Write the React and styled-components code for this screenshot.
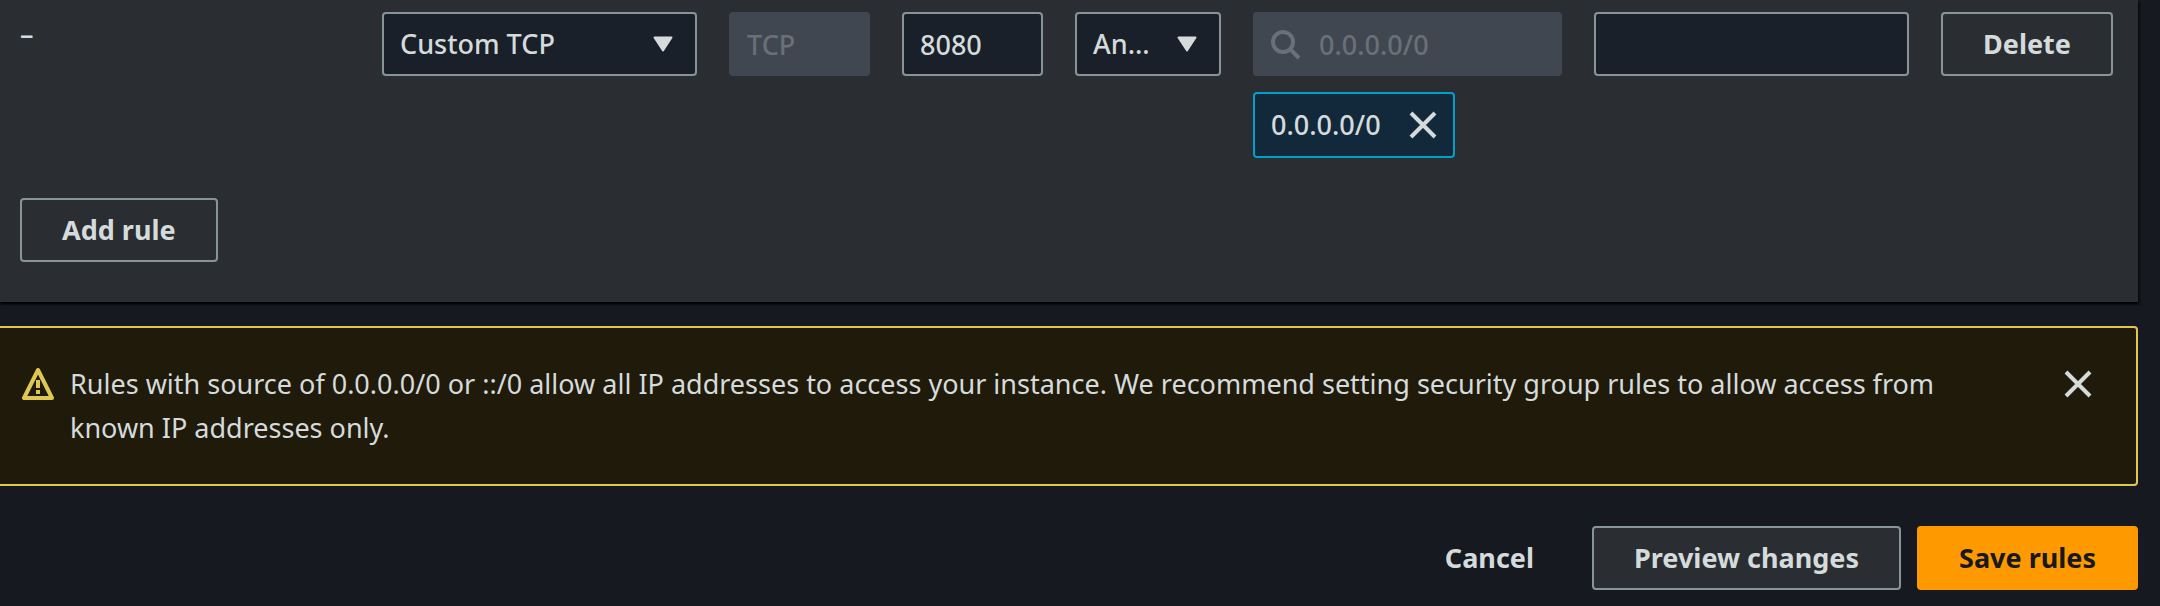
import { useState } from "react";
import styled, { createGlobalStyle, css } from "styled-components";

const GlobalStyle = createGlobalStyle`
  *, *::before, *::after {
    box-sizing: border-box;
  }
  body {
    margin: 0;
    background: #16191f;
    color: #d5dbdb;
    font-family: "Noto Sans", "Open Sans", sans-serif;
    font-size: 27px;
    font-weight: 500;
    line-height: 44px;
  }
  button, input, select {
    font: inherit;
    color: inherit;
    margin: 0;
  }
`;

const Page = styled.main`
  padding-right: 22px;
`;

const Panel = styled.section`
  padding: 12px 25px 40px 20px;
  background: #2a2e33;
  box-shadow: 0 2px 2px #000000, 2px 2px 2px rgba(0, 0, 0, 0.4);
`;

const RuleRow = styled.div`
  display: grid;
  grid-template-columns:
    minmax(0, 330fr) minmax(0, 315fr) minmax(0, 141fr) minmax(0, 141fr)
    minmax(0, 146fr) minmax(0, 309fr) minmax(0, 315fr) minmax(0, 172fr);
  column-gap: 32px;
  align-items: start;
  margin-bottom: 40px;
`;

const fieldStyles = css`
  display: block;
  width: 100%;
  height: 64px;
  padding: 0 16px;
  border: 2px solid #879596;
  border-radius: 4px;
  background: #1a2029;
  outline: none;
  &:focus {
    border-color: #00a1c9;
  }
  &:disabled {
    border-color: #414750;
    background: #414750;
    color: #687078;
    opacity: 1;
  }
`;

const Input = styled.input`
  ${fieldStyles}
  padding-left: ${(props) => (props.$withIcon ? 64 : 16)}px;
  &::placeholder {
    color: #687078;
    opacity: 1;
  }
`;

const Select = styled.select`
  ${fieldStyles}
  appearance: none;
  padding-right: 64px;
  overflow: hidden;
  text-overflow: ellipsis;
  white-space: nowrap;
`;

const FieldWrapper = styled.div`
  position: relative;
  .caret {
    position: absolute;
    top: 24px;
    right: 24px;
    pointer-events: none;
  }
  .search {
    position: absolute;
    top: 18px;
    left: 18px;
    pointer-events: none;
  }
`;

const Token = styled.div`
  display: inline-flex;
  align-items: center;
  gap: 28px;
  height: 66px;
  margin-top: 16px;
  padding: 0 16px;
  border: 2px solid #00a1c9;
  border-radius: 4px;
  background: #12293b;
`;

const IconButton = styled.button`
  display: flex;
  padding: 0;
  border: 0;
  background: none;
  cursor: pointer;
`;

const Button = styled.button`
  height: 64px;
  padding: 0 40px;
  border: 2px solid #879596;
  border-radius: 4px;
  background: #2a2e33;
  font-weight: 700;
  white-space: nowrap;
  cursor: pointer;
  ${(props) =>
    props.$variant === "link" &&
    css`
      border-color: transparent;
      background: none;
    `}
  ${(props) =>
    props.$variant === "primary" &&
    css`
      border-color: #ff9900;
      background: #ff9900;
      color: #16191f;
    `}
  ${(props) =>
    props.$block &&
    css`
      width: 100%;
      padding: 0;
    `}
`;

const Alert = styled.div`
  display: flex;
  align-items: flex-start;
  margin-top: 24px;
  padding: 34px 44px 34px 22px;
  border: 2px solid #dfc852;
  border-left: 0;
  border-radius: 0 4px 4px 0;
  background: #1f1a0a;
  font-weight: 400;
  svg {
    flex: none;
  }
  .warning {
    margin-top: 6px;
  }
  p {
    flex: 1;
    margin: 0 100px 0 16px;
    min-height: 88px;
  }
  button {
    margin-top: 8px;
  }
`;

const Actions = styled.footer`
  display: flex;
  justify-content: flex-end;
  gap: 16px;
  padding: 40px 0 16px;
`;

const Caret = () => (
  <svg className="caret" width="20" height="16" viewBox="0 0 20 16">
    <path
      d="M1.5 1.5h17L10 14.5z"
      fill="#d5dbdb"
      stroke="#d5dbdb"
      strokeWidth="2"
      strokeLinejoin="round"
    />
  </svg>
);

const SearchIcon = () => (
  <svg
    className="search"
    width="30"
    height="30"
    viewBox="0 0 30 30"
    fill="none"
    stroke="#687078"
    strokeWidth="4"
  >
    <circle cx="12" cy="12" r="10" />
    <path d="M19 19l9 9" />
  </svg>
);

const CloseIcon = () => (
  <svg
    width="28"
    height="28"
    viewBox="0 0 28 28"
    fill="none"
    stroke="#d5dbdb"
    strokeWidth="4"
  >
    <path d="M2 2l24 24M26 2L2 26" />
  </svg>
);

const WarningIcon = () => (
  <svg
    className="warning"
    width="32"
    height="32"
    viewBox="0 0 32 32"
    fill="none"
    stroke="#dfc852"
    strokeWidth="4"
  >
    <path d="M16 2L2 30h28z" strokeLinejoin="round" />
    <path d="M16 12v8M16 22v4" />
  </svg>
);

const App = () => {
  const [port, setPort] = useState("8080");
  const [description, setDescription] = useState("");
  const [sources, setSources] = useState(["0.0.0.0/0"]);
  const [showAlert, setShowAlert] = useState(true);

  const removeSource = (source) => {
    setSources(sources.filter((item) => item !== source));
  };

  return (
    <>
      <GlobalStyle />
      <Page>
        <Panel>
          <RuleRow>
            <span>–</span>
            <FieldWrapper>
              <Select aria-label="Type" defaultValue="custom">
                <option value="custom">Custom TCP</option>
                <option value="ssh">SSH</option>
                <option value="http">HTTP</option>
              </Select>
              <Caret />
            </FieldWrapper>
            <Input aria-label="Protocol" value="TCP" disabled readOnly />
            <Input
              aria-label="Port range"
              value={port}
              onChange={(e) => setPort(e.target.value)}
            />
            <FieldWrapper>
              <Select aria-label="Source type" defaultValue="any">
                <option value="any">Anywhere-IPv4</option>
                <option value="custom">Custom</option>
              </Select>
              <Caret />
            </FieldWrapper>
            <div>
              <FieldWrapper>
                <Input
                  $withIcon
                  aria-label="Source"
                  placeholder="0.0.0.0/0"
                  disabled
                />
                <SearchIcon />
              </FieldWrapper>
              {sources.map((source) => (
                <Token key={source}>
                  <span>{source}</span>
                  <IconButton
                    aria-label={`Remove ${source}`}
                    onClick={() => removeSource(source)}
                  >
                    <CloseIcon />
                  </IconButton>
                </Token>
              ))}
            </div>
            <Input
              aria-label="Description"
              value={description}
              onChange={(e) => setDescription(e.target.value)}
            />
            <Button $block>Delete</Button>
          </RuleRow>
          <Button>Add rule</Button>
        </Panel>
        {showAlert ? (
          <Alert role="alert">
            <WarningIcon />
            <p>
              Rules with source of 0.0.0.0/0 or ::/0 allow all IP addresses to
              access your instance. We recommend setting security group rules to
              allow access from known IP addresses only.
            </p>
            <IconButton aria-label="Dismiss" onClick={() => setShowAlert(false)}>
              <CloseIcon />
            </IconButton>
          </Alert>
        ) : null}
        <Actions>
          <Button $variant="link">Cancel</Button>
          <Button>Preview changes</Button>
          <Button $variant="primary">Save rules</Button>
        </Actions>
      </Page>
    </>
  );
};

export default App;
